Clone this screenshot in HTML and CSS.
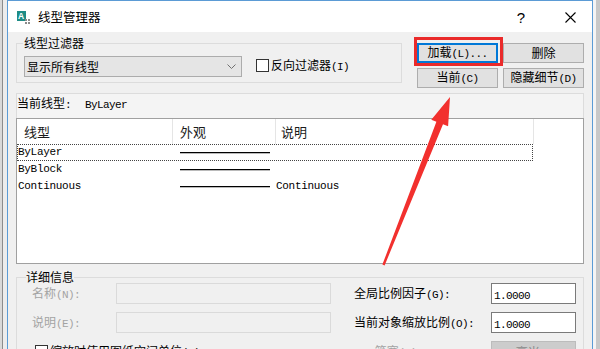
FILE: index.html
```html
<!DOCTYPE html>
<html lang="zh-CN">
<head>
<meta charset="utf-8">
<title>线型管理器</title>
<link rel="stylesheet" href="styles.css">
</head>
<body>
<div class="desk">
  <div class="bg-left"></div>
  <div class="window">
    <div class="titlebar">
      <svg class="app-icon" width="13" height="13" viewBox="0 0 13 13">
        <rect x="0" y="0" width="9" height="10" fill="#1e8c86"/>
        <text x="1" y="8" font-size="8.5" font-family="Liberation Sans" font-weight="bold" fill="#ffffff">A</text>
        <rect x="8" y="8" width="2" height="2" fill="#8a8a8a"/>
        <rect x="11" y="8" width="2" height="2" fill="#8a8a8a"/>
        <rect x="8" y="11" width="2" height="2" fill="#8a8a8a"/>
        <rect x="11" y="11" width="2" height="2" fill="#8a8a8a"/>
      </svg>
      <span class="title">线型管理器</span>
      <span class="help">?</span>
      <svg class="close" width="11" height="11" viewBox="0 0 11 11">
        <path d="M0.5 0.5 L10.5 10.5 M10.5 0.5 L0.5 10.5" stroke="#000" stroke-width="1.1" fill="none"/>
      </svg>
    </div>
    <div class="client">
      <div class="top">
        <fieldset class="group filter">
          <legend>线型过滤器</legend>
          <div class="filter-row">
            <div class="combo">
              <span>显示所有线型</span>
              <svg class="chev" width="9" height="5" viewBox="0 0 9 5"><path d="M0.5 0.5 L4.5 4.5 L8.5 0.5" stroke="#707070" fill="none"/></svg>
            </div>
            <div class="check"><span class="box"></span><span>反向过滤器<span class="a">(I)</span></span></div>
          </div>
        </fieldset>
        <div class="buttons">
          <button class="btn default">加载<span class="a">(L)...</span></button>
          <button class="btn">删除</button>
          <button class="btn">当前<span class="a">(C)</span></button>
          <button class="btn">隐藏细节<span class="a">(D)</span></button>
        </div>
      </div>
      <div class="current">当前线型<span class="a">:</span><span class="a cur-val">ByLayer</span></div>
      <div class="list">
        <div class="list-head">
          <div class="hc c1">线型</div>
          <div class="hc c2">外观</div>
          <div class="hc c3">说明</div>
        </div>
        <div class="row focus"><span>ByLayer</span><span class="look"><i></i></span><span class="desc"></span></div>
        <div class="row"><span>ByBlock</span><span class="look"><i></i></span><span class="desc"></span></div>
        <div class="row"><span>Continuous</span><span class="look"><i></i></span><span class="desc">Continuous</span></div>
      </div>
      <fieldset class="group details">
        <legend>详细信息</legend>
        <div class="detail-grid">
          <div class="lbl dis">名称<span class="a">(N):</span></div>
          <div class="field dis-field"></div>
          <div></div>
          <div class="lbl2">全局比例因子<span class="a">(G):</span></div>
          <div class="field num"><span class="a">1.0000</span></div>

          <div class="lbl dis">说明<span class="a">(E):</span></div>
          <div class="field dis-field"></div>
          <div></div>
          <div class="lbl2">当前对象缩放比例<span class="a">(O):</span></div>
          <div class="field num"><span class="a">1.0000</span></div>

          <div class="check paper"><span class="box"></span><span>缩放时使用图纸空间单位<span class="a">(U)</span></span></div>
          <div></div>
          <div class="lbl2 dis"><span class="a">ISO</span> 笔宽<span class="a">(P):</span></div>
          <div class="field dis-combo"><span class="a">1.0</span> 毫米</div>
        </div>
      </fieldset>
    </div>
  </div>
  <div class="bg-right"></div>
</div>
<div class="highlight"></div>
<svg class="arrow" width="600" height="349" viewBox="0 0 600 349">
  <polygon points="450,97 448.1,126.3 443,124.3 384.6,265.4 382.4,264.6 436.4,121.7 431.3,119.7" fill="#f2302e"/>
</svg>
</body>
</html>
```
FILE: styles.css
```css
* { box-sizing: border-box; }
html, body { margin: 0; padding: 0; }
body {
  width: 600px;
  height: 349px;
  overflow: hidden;
  position: relative;
  background: #dcdcdc;
  font-family: "Noto Sans CJK SC", sans-serif;
  font-size: 12px;
  line-height: 16px;
  color: #000;
}
.a {
  font-family: "Liberation Mono", monospace;
  font-size: 11px;
  letter-spacing: -0.6px;
}
.desk { display: flex; height: 349px; }
.bg-left {
  width: 7px;
  background: linear-gradient(to right, #d9d9d9 0 2px, #8c8c8c 2px 3px, #ececec 3px);
}
.bg-right {
  width: 7px;
  background: linear-gradient(to right, #f4f4f4 0 3px, #c8c8c8 3px);
}
.window {
  width: 586px;
  border: 1px solid #5b9bd5;
  border-bottom: none;
  display: flex;
  flex-direction: column;
  background: #f0f0f0;
}
.titlebar {
  flex: none;
  height: 31px;
  background: #fff;
  display: flex;
  align-items: center;
  padding-left: 9px;
}
.app-icon { margin-right: 8px; margin-top: 1px; }
.title { font-size: 12.5px; color: #000; }
.help {
  margin-left: auto;
  font-family: "Liberation Sans", sans-serif;
  font-size: 15px;
  margin-right: 40px;
  margin-top: 2px;
}
.close { margin-right: 16px; margin-top: 1px; }
.client { flex: 1; min-height: 0; overflow: hidden; padding: 0 8px; }

.top {
  height: 61px;
  display: flex;
  justify-content: space-between;
  align-items: flex-start;
  padding-top: 4px;
}
.group {
  margin: 0;
  border: 1px solid #dcdcdc;
  min-width: 0;
}
.group legend {
  line-height: 14px;
  padding: 0 1px;
  color: #000;
}
.filter {
  width: 386px;
  padding: 0 7px 5px 7px;
}
.filter legend { margin-left: -1px; }
.filter-row {
  display: flex;
  align-items: center;
  margin-top: 6px;
}
.combo {
  width: 218px;
  height: 21px;
  background: #e5e5e5;
  border: 1px solid #acacac;
  display: flex;
  align-items: center;
  padding-left: 2px;
  padding-right: 5px;
}
.combo .chev { margin-left: auto; }
.check { display: flex; align-items: center; }
.filter .check { margin-left: 14px; margin-top: -2px; }
.box {
  width: 13px;
  height: 13px;
  border: 1px solid #333;
  background: #fff;
  margin-right: 2px;
  flex: none;
}
.buttons {
  margin-top: 7px;
  display: grid;
  grid-template-columns: 81px 81px;
  grid-auto-rows: 20px;
  gap: 5px;
}
.btn {
  margin: 0;
  padding: 0;
  background: #e1e1e1;
  border: 1px solid #adadad;
  font-family: "Noto Sans CJK SC", sans-serif;
  font-size: 12px;
  line-height: 16px;
  color: #000;
}
.btn.default {
  border-color: #0078d7;
  box-shadow: inset 0 0 0 1px #0078d7;
}
.current {
  height: 25px;
  border: 1px solid #dcdcdc;
  border-bottom: none;
  padding-left: 0;
  padding-top: 1px;
  background: #f4f4f4;
  line-height: 16px;
}
.cur-val { margin-left: 14px; }

.list {
  height: 146px;
  border: 1px solid #a0a0a0;
  background: #fff;
}
.list-head { display: flex; height: 25px; }
.hc {
  font-size: 13px;
  line-height: 25px;
  border-right: 1px solid #e5e5e5;
  color: #1a1a1a;
}
.c1 { width: 156px; padding-left: 7px; }
.c2 { width: 103px; padding-left: 7px; }
.c3 { width: 258px; padding-left: 5px; }
.row {
  width: 516px;
  height: 17px;
  border: 1px solid transparent;
  display: grid;
  grid-template-columns: 161px 96px 1fr;
  align-items: center;
  font-family: "Liberation Mono", monospace;
  font-size: 11px;
  letter-spacing: -0.3px;
  line-height: 15px;
}
.row.focus { border: 1px dotted #444; }
.look { display: flex; align-items: center; height: 15px; }
.look i { display: block; width: 90px; height: 1px; background: #000; margin-left: 1px; box-shadow: 0 0.5px 0 #777; }
.desc { padding-left: 1px; }

.details {
  margin-top: 6px;
  padding: 0 8px 0 9px;
}
.details legend { padding: 0; }
.detail-grid {
  margin-top: -1px;
  display: grid;
  grid-template-columns: 90px 215px 23px 137px 85px;
  grid-template-rows: 21px 21px 21px;
  row-gap: 8px;
  align-items: center;
}
.lbl { padding-left: 6px; }
.dis { color: #a3a3a3; }
.field { height: 21px; }
.dis-field { border: 1px solid #dadada; background: #f0f0f0; }
.num {
  background: #fff;
  border: 1px solid #7a7a7a;
  padding-left: 2px;
  line-height: 19px;
}
.paper { grid-column: 1 / 3; padding-left: 9px; }
.dis-combo {
  background: #cccccc;
  border: 1px solid #bcbcbc;
  color: #8a8a8a;
  padding-left: 3px;
  line-height: 19px;
}

.highlight {
  position: absolute;
  left: 414px;
  top: 37px;
  width: 89px;
  height: 29px;
  border: 3px solid #ea2a2a;
}
.arrow {
  position: absolute;
  left: 0;
  top: 0;
  pointer-events: none;
}
```
